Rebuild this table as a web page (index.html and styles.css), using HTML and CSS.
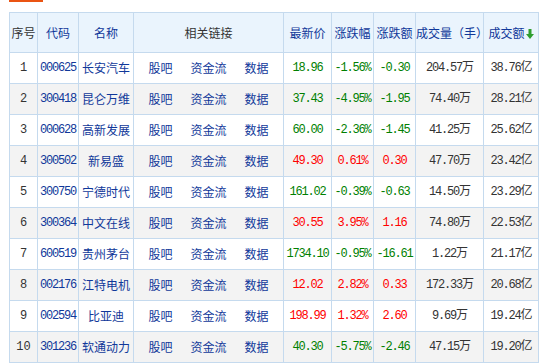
FILE: index.html
```html
<!DOCTYPE html>
<html>
<head>
<meta charset="utf-8">
<link rel="stylesheet" href="styles.css">
</head>
<body>
<div class="tabbar"><span class="tab-active"></span></div>
<table class="rank">
<colgroup>
<col class="c1"><col class="c2"><col class="c3"><col class="c4"><col class="c5"><col class="c6"><col class="c7"><col class="c8"><col class="c9">
</colgroup>
<thead>
<tr>
<th class="plain">序号</th><th>代码</th><th>名称</th><th class="plain">相关链接</th><th>最新价</th><th>涨跌幅</th><th>涨跌额</th><th>成交量（手）</th><th>成交额<svg class="sort" width="8" height="10" viewBox="0 0 8 10"><path d="M2.5 0h3v5h2.5L4 10 0 5h2.5z" fill="#2f9e2f"/></svg></th>
</tr>
</thead>
<tbody>
<tr><td>1</td><td class="code num">000625</td><td class="name">长安汽车</td><td class="links"><a>股吧</a><a>资金流</a><a>数据</a></td><td class="num down">18.96</td><td class="num down">-1.56%</td><td class="num down">-0.30</td><td class="num">204.57万</td><td class="num">38.76亿</td></tr>
<tr><td>2</td><td class="code num">300418</td><td class="name">昆仑万维</td><td class="links"><a>股吧</a><a>资金流</a><a>数据</a></td><td class="num down">37.43</td><td class="num down">-4.95%</td><td class="num down">-1.95</td><td class="num">74.40万</td><td class="num">28.21亿</td></tr>
<tr><td>3</td><td class="code num">000628</td><td class="name">高新发展</td><td class="links"><a>股吧</a><a>资金流</a><a>数据</a></td><td class="num down">60.00</td><td class="num down">-2.36%</td><td class="num down">-1.45</td><td class="num">41.25万</td><td class="num">25.62亿</td></tr>
<tr><td>4</td><td class="code num">300502</td><td class="name">新易盛</td><td class="links"><a>股吧</a><a>资金流</a><a>数据</a></td><td class="num up">49.30</td><td class="num up">0.61%</td><td class="num up">0.30</td><td class="num">47.70万</td><td class="num">23.42亿</td></tr>
<tr><td>5</td><td class="code num">300750</td><td class="name">宁德时代</td><td class="links"><a>股吧</a><a>资金流</a><a>数据</a></td><td class="num down">161.02</td><td class="num down">-0.39%</td><td class="num down">-0.63</td><td class="num">14.50万</td><td class="num">23.29亿</td></tr>
<tr><td>6</td><td class="code num">300364</td><td class="name">中文在线</td><td class="links"><a>股吧</a><a>资金流</a><a>数据</a></td><td class="num up">30.55</td><td class="num up">3.95%</td><td class="num up">1.16</td><td class="num">74.80万</td><td class="num">22.53亿</td></tr>
<tr><td>7</td><td class="code num">600519</td><td class="name">贵州茅台</td><td class="links"><a>股吧</a><a>资金流</a><a>数据</a></td><td class="num down">1734.10</td><td class="num down">-0.95%</td><td class="num down">-16.61</td><td class="num">1.22万</td><td class="num">21.17亿</td></tr>
<tr><td>8</td><td class="code num">002176</td><td class="name">江特电机</td><td class="links"><a>股吧</a><a>资金流</a><a>数据</a></td><td class="num up">12.02</td><td class="num up">2.82%</td><td class="num up">0.33</td><td class="num">172.33万</td><td class="num">20.68亿</td></tr>
<tr><td>9</td><td class="code num">002594</td><td class="name">比亚迪</td><td class="links"><a>股吧</a><a>资金流</a><a>数据</a></td><td class="num up">198.99</td><td class="num up">1.32%</td><td class="num up">2.60</td><td class="num">9.69万</td><td class="num">19.24亿</td></tr>
<tr><td>10</td><td class="code num">301236</td><td class="name">软通动力</td><td class="links"><a>股吧</a><a>资金流</a><a>数据</a></td><td class="num down">40.30</td><td class="num down">-5.75%</td><td class="num down">-2.46</td><td class="num">47.15万</td><td class="num">19.20亿</td></tr>
</tbody>
</table>
</body>
</html>
```
FILE: styles.css
```css
html, body {
  margin: 0;
  padding: 0;
  background: #fff;
}
body {
  font-family: "Noto Sans CJK SC", "Liberation Sans", sans-serif;
  font-size: 12px;
  color: #333;
}
.tabbar {
  height: 12px;
  padding-left: 9px;
}
.tab-active {
  display: block;
  width: 34px;
  height: 2px;
  background: #ea5413;
}
.rank {
  margin-left: 9px;
  border-collapse: collapse;
  table-layout: fixed;
  width: 530px;
}
.c1 { width: 28px; }
.c2 { width: 41px; }
.c3 { width: 55px; }
.c4 { width: 150px; }
.c5 { width: 48px; }
.c6 { width: 42px; }
.c7 { width: 42px; }
.c8 { width: 68px; }
.c9 { width: 55px; }
.rank th, .rank td {
  border: 1px solid #c5daee;
  padding: 0;
  text-align: center;
  white-space: nowrap;
  overflow: visible;
  line-height: 16px;
}
.rank th {
  height: 39px;
  background: #eaf4fd;
  font-weight: normal;
  color: #10389a;
}
.rank th.plain {
  color: #333;
}
.sort {
  vertical-align: -1px;
  margin-left: 1px;
}
.rank td {
  height: 30px;
}
.rank tbody tr:nth-child(even) td {
  background: #f3f3f3;
}
.num, .rank td:first-child {
  font-family: "Liberation Mono", "DejaVu Sans Mono", "Noto Sans CJK SC", monospace;
}
.num {
  letter-spacing: -1.2px;
}
.code, .name, .links a {
  color: #10389a;
}
.links a {
  display: inline-block;
  margin: 0 9px;
  cursor: pointer;
}
.up { color: #ff0000; }
.down { color: #008000; }
```
